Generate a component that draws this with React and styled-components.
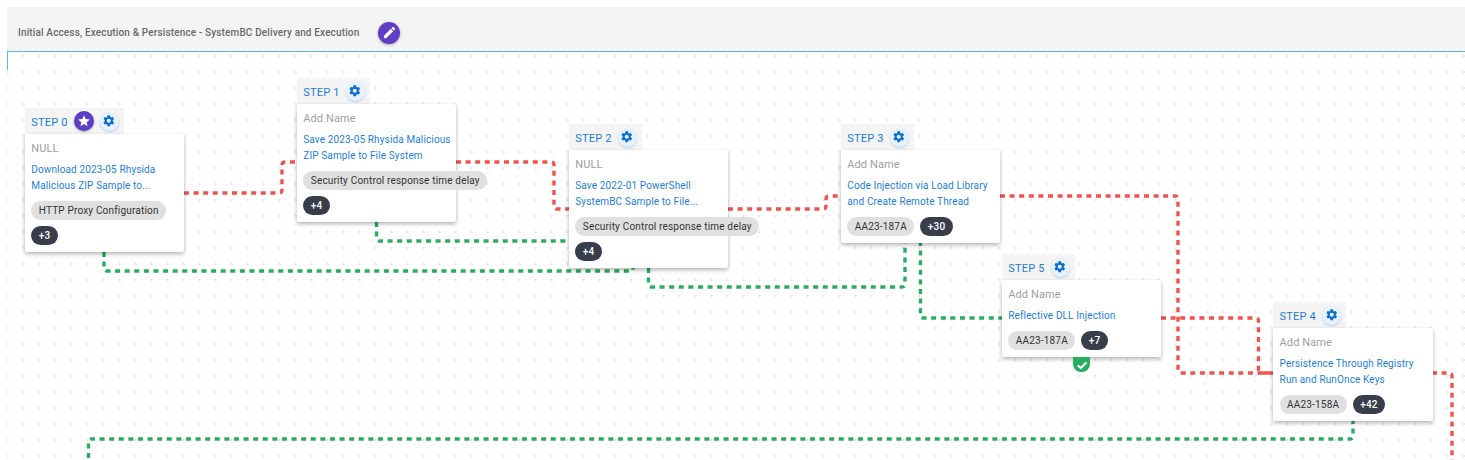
import { createGlobalStyle } from 'styled-components';
import styled from 'styled-components';

const GlobalStyle = createGlobalStyle`
  html, body {
    margin: 0;
    padding: 0;
    background: #fff;
    overflow: hidden;
  }
  body {
    font-family: Roboto, "Liberation Sans", sans-serif;
  }
`;

const gearPath = "M19.14 12.94c.04-.3.06-.61.06-.94 0-.32-.02-.64-.07-.94l2.03-1.58c.18-.14.23-.41.12-.61l-1.92-3.32c-.12-.22-.37-.29-.59-.22l-2.39.96c-.5-.38-1.03-.7-1.62-.94l-.36-2.54c-.04-.24-.24-.41-.48-.41h-3.84c-.24 0-.43.17-.47.41l-.36 2.54c-.59.24-1.13.57-1.62.94l-2.39-.96c-.22-.08-.47 0-.59.22L2.74 8.87c-.12.21-.08.47.12.61l2.03 1.58c-.05.3-.09.63-.09.94s.02.64.07.94l-2.03 1.58c-.18.14-.23.41-.12.61l1.92 3.32c.12.22.37.29.59.22l2.39-.96c.5.38 1.03.7 1.62.94l.36 2.54c.05.24.24.41.48.41h3.84c.24 0 .44-.17.47-.41l.36-2.54c.59-.24 1.13-.56 1.62-.94l2.39.96c.22.08.47 0 .59-.22l1.92-3.32c.12-.22.07-.47-.12-.61l-2.01-1.58zM12 15.6c-1.98 0-3.6-1.62-3.6-3.6s1.62-3.6 3.6-3.6 3.6 1.62 3.6 3.6-1.62 3.6-3.6 3.6z";
const starPath = "M12 17.27 18.18 21l-1.64-7.03L22 9.24l-7.19-.61L12 2 9.19 8.63 2 9.24l5.46 4.73L5.82 21z";
const pencilPath = "M3 17.25V21h3.75L17.81 9.94l-3.75-3.75L3 17.25zM20.71 7.04c.39-.39.39-1.02 0-1.41l-2.34-2.34a.9959.9959 0 0 0-1.41 0l-1.83 1.83 3.75 3.75 1.83-1.83z";

const steps = [
  { label: 'STEP 0', x: 24.7, y: 108, name: 'NULL', starred: true, lines: ['Download 2023-05 Rhysida', 'Malicious ZIP Sample to...'], chip: 'HTTP Proxy Configuration', more: '+3', stacked: true },
  { label: 'STEP 1', x: 296.7, y: 78, name: 'Add Name', lines: ['Save 2023-05 Rhysida Malicious', 'ZIP Sample to File System'], chip: 'Security Control response time delay', more: '+4', stacked: true },
  { label: 'STEP 2', x: 568.7, y: 124, name: 'NULL', lines: ['Save 2022-01 PowerShell', 'SystemBC Sample to File...'], chip: 'Security Control response time delay', more: '+4', stacked: true },
  { label: 'STEP 3', x: 840.7, y: 124, name: 'Add Name', lines: ['Code Injection via Load Library', 'and Create Remote Thread'], chip: 'AA23-187A', more: '+30' },
  { label: 'STEP 5', x: 1001.7, y: 254, name: 'Add Name', lines: ['Reflective DLL Injection'], chip: 'AA23-187A', more: '+7', passed: true },
  { label: 'STEP 4', x: 1273, y: 302, name: 'Add Name', lines: ['Persistence Through Registry', 'Run and RunOnce Keys'], chip: 'AA23-158A', more: '+42' },
];

const RED = '#ef5350';
const GREEN = '#27ae60';

const edges = [
  { color: RED, points: [[184, 193], [282, 193], [282, 162], [297, 162]] },
  { color: RED, points: [[456, 162], [554, 162], [554, 209], [569, 209]] },
  { color: RED, points: [[728, 209], [826, 209], [826, 196], [841, 196]] },
  { color: RED, points: [[1000, 196], [1178, 196], [1178, 373], [1273, 373]] },
  { color: RED, points: [[1161, 318], [1258.5, 318], [1258.5, 373], [1273, 373]] },
  { color: RED, points: [[1432, 373], [1452, 373], [1452, 470]] },
  { color: GREEN, points: [[104, 252], [104, 271], [633, 271], [633, 268]] },
  { color: GREEN, points: [[376.5, 222], [376.5, 241], [569, 241]] },
  { color: GREEN, points: [[648.5, 268], [648.5, 287], [905, 287], [905, 241]] },
  { color: GREEN, points: [[920.5, 241], [920.5, 318], [1002, 318]] },
  { color: GREEN, points: [[1353, 419], [1353, 439], [88.5, 439], [88.5, 470]] },
];

// rounded corners like a smoothstep edge
const toPath = (points, radius = 3) => {
  let d = `M${points[0][0]} ${points[0][1]}`;
  for (let i = 1; i < points.length - 1; i++) {
    const [px, py] = points[i - 1];
    const [x, y] = points[i];
    const [nx, ny] = points[i + 1];
    const r1 = Math.min(radius, Math.hypot(x - px, y - py) / 2);
    const r2 = Math.min(radius, Math.hypot(nx - x, ny - y) / 2);
    const inX = x - Math.sign(x - px) * r1;
    const inY = y - Math.sign(y - py) * r1;
    const outX = x + Math.sign(nx - x) * r2;
    const outY = y + Math.sign(ny - y) * r2;
    d += ` L${inX} ${inY} Q${x} ${y} ${outX} ${outY}`;
  }
  const last = points[points.length - 1];
  return `${d} L${last[0]} ${last[1]}`;
};

const Icon = ({ path, size }) => (
  <svg width={size} height={size} viewBox="0 0 24 24" fill="currentColor" aria-hidden="true">
    <path d={path} />
  </svg>
);

const StepNode = ({ step }) => (
  <Node $x={step.x - 7} $y={step.y - 52}>
    <StepTab>
      <StepLabel>{step.label}</StepLabel>
      {step.starred && <StarButton><Icon path={starPath} size={14} /></StarButton>}
      <GearButton><Icon path={gearPath} size={13.5} /></GearButton>
    </StepTab>
    <Card>
      <NodeName>{step.name}</NodeName>
      <NodeLink>
        {step.lines.map((line) => <div key={line}>{line}</div>)}
      </NodeLink>
      <Chips $stacked={step.stacked}>
        <Chip>{step.chip}</Chip>
        <MoreChip>{step.more}</MoreChip>
      </Chips>
      {step.passed && (
        <PassedBadge>
          <svg width="12" height="12" viewBox="0 0 24 24" fill="none" stroke="currentColor" strokeWidth="4" aria-hidden="true">
            <path d="M3.5 12.5 9.5 18 21 6.5" />
          </svg>
        </PassedBadge>
      )}
    </Card>
  </Node>
);

const App = () => (
  <>
    <GlobalStyle />
    <Page>
      <Header>
        <Title>Initial Access, Execution &amp; Persistence - SystemBC Delivery and Execution</Title>
        <EditButton><Icon path={pencilPath} size={15} /></EditButton>
      </Header>
      <Canvas>
        <EdgeLayer viewBox="7 52 1458 408" width="1458" height="408">
          {edges.map((edge, i) => (
            <path key={i} d={toPath(edge.points)} fill="none" stroke={edge.color} strokeWidth="3.4" strokeDasharray="5 4.6" />
          ))}
        </EdgeLayer>
        {steps.map((step) => <StepNode key={step.label} step={step} />)}
      </Canvas>
      <CornerLine />
    </Page>
  </>
);

export default App;

const Page = styled.div`
  position: relative;
  width: 1465px;
  height: 460px;
  padding: 7px 0 0 7px;
  box-sizing: border-box;
  display: flex;
  flex-direction: column;
  overflow: hidden;
`;

const Header = styled.div`
  display: flex;
  align-items: center;
  box-sizing: border-box;
  height: 45px;
  padding: 7px 0 0 11px;
  gap: 19px;
  background: #f4f4f4;
  border-bottom: 1px solid #64b0f0;
`;

const Title = styled.span`
  font-size: 10px;
  font-weight: 500;
  letter-spacing: 0.14px;
  color: #6b6b6b;
`;

const EditButton = styled.span`
  width: 22px;
  height: 22px;
  border-radius: 50%;
  background: #5f3dc4;
  color: #fff;
  display: flex;
  align-items: center;
  justify-content: center;
  box-shadow: 0 1px 3px rgba(0, 0, 0, 0.3);
`;

const Canvas = styled.div`
  position: relative;
  flex: 1;
  background-image: radial-gradient(circle, #d4d4d4 0.6px, transparent 1px);
  background-size: 16px 16px;
  background-position: 8.6px -4px;
`;

const CornerLine = styled.div`
  position: absolute;
  left: 7px;
  top: 51px;
  width: 1px;
  height: 19px;
  background: #64b0f0;
`;

const EdgeLayer = styled.svg`
  position: absolute;
  left: 0;
  top: 0;
`;

const Node = styled.div.attrs((p) => ({ style: { left: p.$x, top: p.$y } }))`
  position: absolute;
  width: 159.5px;
`;

const StepTab = styled.div`
  display: inline-flex;
  align-items: center;
  height: 26px;
  padding: 0 5px 0 6.6px;
  background: #f4f4f4;
  vertical-align: top;
`;

const StepLabel = styled.span`
  margin-top: 2px;
  font-size: 11px;
  letter-spacing: 0.2px;
  color: #1b7bd8;
`;

const StarButton = styled.span`
  width: 20px;
  height: 20px;
  margin-left: 6px;
  border-radius: 50%;
  background: #5f3dc4;
  color: #fff;
  display: flex;
  align-items: center;
  justify-content: center;
  box-shadow: 0 1px 2px rgba(0, 0, 0, 0.3);
`;

const GearButton = styled.span`
  width: 19px;
  height: 19px;
  margin-left: 6px;
  border-radius: 50%;
  background: #e8f2fd;
  color: #0b6fd0;
  display: flex;
  align-items: center;
  justify-content: center;
  box-shadow: 0 1px 2px rgba(25, 118, 210, 0.3);
`;

const Card = styled.div`
  position: relative;
  box-sizing: border-box;
  padding: 8px 6.6px 7px;
  background: #fff;
  border-radius: 2px;
  box-shadow: 0 2px 4px rgba(0, 0, 0, 0.3);
  z-index: 1;
`;

const NodeName = styled.div`
  font-size: 11px;
  line-height: 14px;
  letter-spacing: 0.1px;
  color: #9e9e9e;
`;

const NodeLink = styled.div`
  margin-top: 6px;
  font-size: 10px;
  line-height: 16px;
  letter-spacing: 0.13px;
  white-space: nowrap;
  color: #1b80dd;
`;

const Chips = styled.div`
  display: flex;
  flex-direction: ${(p) => (p.$stacked ? 'column' : 'row')};
  align-items: flex-start;
  gap: 6px;
  margin-top: 7px;
`;

const Chip = styled.span`
  height: 19px;
  padding: 0 7.5px;
  border-radius: 10px;
  background: #e0e0e0;
  font-size: 10px;
  line-height: 19px;
  letter-spacing: 0.18px;
  white-space: nowrap;
  color: #333;
`;

const MoreChip = styled(Chip)`
  background: #373d4b;
  color: #fff;
  font-weight: 500;
  padding: 0 7.5px;
`;

const PassedBadge = styled.span`
  position: absolute;
  top: 100%;
  left: 71.5px;
  width: 17px;
  height: 15px;
  border-radius: 0 0 8px 8px;
  background: #27ae60;
  color: #fff;
  display: flex;
  align-items: center;
  justify-content: center;
`;
